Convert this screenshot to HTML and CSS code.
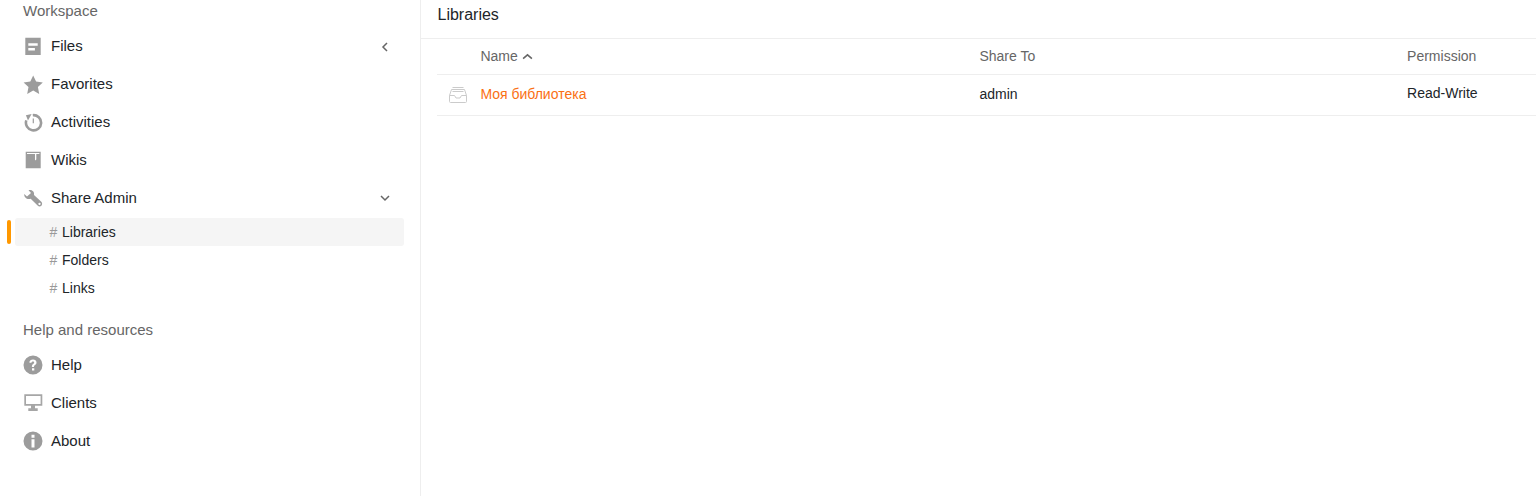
FILE: index.html
```html
<!DOCTYPE html>
<html lang="en">
<head>
    <meta charset="UTF-8">
    <title>Libraries</title>
    <link rel="stylesheet" href="styles.css">
</head>
<body>
    <div class="side">
        <h3 class="side-title">Workspace</h3>
        <a class="nav-item">
            <svg class="nav-icon" viewBox="0 0 20 20"><path fill-rule="evenodd" d="M2.300 1.700h15.400V19H2.300zM5.300 7.200v2.600h9.400V7.200zM5.300 12v2.500h6.600V12z"/></svg>
            <span class="nav-text">Files</span>
            <svg class="caret caret-left" viewBox="0 0 12 12"><path d="M8 2 4 6l4 4"/></svg>
        </a>
        <a class="nav-item">
            <svg class="nav-icon" viewBox="0 0 20 20"><path d="M10.200 1.600l2.900 6 6.700.9-4.900 4.600 1.300 6.800-6-3.400-6 3.400 1.300-6.800L.6 8.500l6.700-.9z"/></svg>
            <span class="nav-text">Favorites</span>
        </a>
        <a class="nav-item">
            <svg class="nav-icon" viewBox="0 0 20 20"><path class="ring" d="M9.800 3.200A7.600 7.600 0 1 1 3.300 8.400"/><path d="M8.600 2 2.900 3.200 5 8.400z"/><path d="M9.700 6.500h1.200v4.700H9.700z"/></svg>
            <span class="nav-text">Activities</span>
        </a>
        <a class="nav-item">
            <svg class="nav-icon" viewBox="0 0 20 20"><path fill-rule="evenodd" d="M2.700 1.700h15v16.600h-15zM4 3v1.100h8v6.400l1.300-.9V4.100h3.100V3z"/></svg>
            <span class="nav-text">Wikis</span>
        </a>
        <a class="nav-item">
            <svg class="nav-icon" viewBox="0 0 20 20"><path fill-rule="evenodd" d="M5.500 2.200C9 1 11.800 3.700 11 7l7.300 6.800c1.200 1.300 1 2.900.1 3.900-1 1-2.700 1-3.800-.1L7.700 10.700C4.300 12 1 9.600 1.200 6L4 8.500 8 5zM15.700 15.100a1.100 1.100 0 1 0 1.600 1.600 1.100 1.100 0 0 0-1.600-1.600z"/></svg>
            <span class="nav-text">Share Admin</span>
            <svg class="caret" viewBox="0 0 12 12"><path d="M2 4l4 4 4-4"/></svg>
        </a>
        <ul class="sub-list">
            <li class="sub-item active"><span class="hash">#</span>Libraries</li>
            <li class="sub-item"><span class="hash">#</span>Folders</li>
            <li class="sub-item"><span class="hash">#</span>Links</li>
        </ul>
        <h3 class="side-title second">Help and resources</h3>
        <a class="nav-item">
            <svg class="nav-icon" viewBox="0 0 20 20"><path fill-rule="evenodd" d="M10 .5a9.500 9.500 0 1 1 0 19 9.500 9.500 0 0 1 0-19zM9 13.200v2.300h2.300v-2.300zM6.300 7.500l2 .4c.2-1 .7-1.500 1.600-1.500.8 0 1.300.4 1.300 1.100 0 .6-.4 1-1 1.400-1.100.8-1.300 1.400-1.300 3h2.100c0-1 .2-1.300 1-1.900 1-.7 1.500-1.500 1.500-2.600 0-1.900-1.500-3-3.500-3-2.100 0-3.400 1.100-3.700 3.100z"/></svg>
            <span class="nav-text">Help</span>
        </a>
        <a class="nav-item">
            <svg class="nav-icon monitor" viewBox="0 0 20 20"><path fill-rule="evenodd" d="M1.300 1.300h18v11.400H12v2.500h2.700V18H5.300v-2.800H8v-2.500H1.300zM3 3v8h14.600V3z"/></svg>
            <span class="nav-text">Clients</span>
        </a>
        <a class="nav-item">
            <svg class="nav-icon" viewBox="0 0 20 20"><path fill-rule="evenodd" d="M10 .5a9.500 9.500 0 1 1 0 19 9.500 9.500 0 0 1 0-19zM8.500 3.800v2.900h3V3.800zM8.500 8.300v8.200h3V8.300z"/></svg>
            <span class="nav-text">About</span>
        </a>
    </div>
    <div class="main">
        <div class="path-bar">Libraries</div>
        <table class="lib-table">
            <thead>
                <tr>
                    <th class="col-icon"></th>
                    <th class="col-name">Name <svg class="sort" viewBox="0 0 10 6"><path d="M1 5l4-3.500L9 5"/></svg></th>
                    <th class="col-share">Share To</th>
                    <th>Permission</th>
                </tr>
            </thead>
            <tbody>
                <tr>
                    <td class="cell-icon">
                        <svg class="lib-icon" viewBox="0 0 18 16"><path d="M3.500 .5h11M2.500 2.500h13M3.500 4.500h11M.5 8.500h5l1.500 2.500h4l1.500-2.500h5v6a1 1 0 0 1-1 1h-15a1 1 0 0 1-1-1zM.5 8.500l2-6M17.500 8.500l-2-6"/></svg>
                    </td>
                    <td><a class="lib-link">Моя библиотека</a></td>
                    <td>admin</td>
                    <td><span class="perm">Read-Write</span></td>
                </tr>
            </tbody>
        </table>
    </div>
</body>
</html>
```

FILE: styles.css
```css
body {
    margin: 0;
    height: 496px;
    overflow: hidden;
    display: flex;
    font-family: "Liberation Sans", Arial, sans-serif;
    font-size: 14px;
    color: #212529;
    background-color: #fff;
}
.side {
    width: 420px;
    flex-shrink: 0;
    border-right: 1px solid #eee;
}
.side-title {
    margin: 0;
    padding-left: 23px;
    height: 20px;
    line-height: 20px;
    font-size: 15px;
    font-weight: normal;
    color: #666;
}
.side-title.second {
    margin-top: 18px;
    margin-bottom: 6px;
}
.side-title:first-child {
    margin-top: 1px;
    margin-bottom: 6px;
}
.nav-item {
    display: flex;
    align-items: center;
    height: 38px;
    padding-left: 23px;
    font-size: 15px;
}
.nav-icon {
    width: 20px;
    height: 20px;
    fill: #9c9c9c;
    flex-shrink: 0;
}
.nav-icon.monitor {
    fill: #a6a6a6;
}
.nav-icon .ring {
    fill: none;
    stroke: #9c9c9c;
    stroke-width: 2.600;
}
.nav-text {
    margin-left: 8px;
    flex: 1;
    position: relative;
    top: -1px;
}
.caret {
    width: 12px;
    height: 12px;
    margin-right: 29px;
    fill: none;
    stroke: #666;
    stroke-width: 1.500;
}
.caret-left {
    margin-top: 2px;
}
.sub-list {
    list-style: none;
    margin: 1px 0 0;
    padding: 0;
}
.sub-item {
    position: relative;
    display: flex;
    align-items: center;
    height: 28px;
    margin: 0 16px 0 15px;
    padding-left: 34.400px;
    border-radius: 3px;
}
.sub-item.active {
    background-color: #f5f5f5;
}
.sub-item.active::before {
    content: "";
    position: absolute;
    left: -8px;
    top: 2px;
    width: 4px;
    height: 24px;
    border-radius: 2px;
    background-color: #ff9800;
}
.hash {
    width: 12.600px;
    color: #999;
}
.main {
    flex: 1;
    min-width: 0;
}
.path-bar {
    height: 38px;
    line-height: 30px;
    padding-left: 16.500px;
    font-size: 16px;
    border-bottom: 1px solid #eee;
}
.lib-table {
    width: 1099px;
    margin-left: 16px;
    border-collapse: collapse;
    table-layout: fixed;
}
.lib-table th {
    height: 33px;
    padding: 0 0 2px;
    text-align: left;
    font-weight: normal;
    color: #666;
    border-bottom: 1px solid #eee;
}
.col-icon {
    width: 43.400px;
}
.col-name {
    width: 499px;
}
.col-share {
    width: 427.700px;
}
.sort {
    width: 11px;
    height: 7px;
    margin-left: 0;
    vertical-align: 1px;
    fill: none;
    stroke: #666;
    stroke-width: 1.400;
}
.lib-table td {
    height: 38px;
    padding: 0 0 2px;
    border-bottom: 1px solid #eee;
}
.lib-table .cell-icon {
    padding-left: 12px;
}
.lib-icon {
    display: block;
    width: 18px;
    height: 16px;
    margin-top: 2px;
    fill: none;
    stroke: #cbcbcb;
    stroke-width: 1;
}
.lib-link {
    color: #fa7014;
}
.perm {
    position: relative;
    top: -1px;
}
```
